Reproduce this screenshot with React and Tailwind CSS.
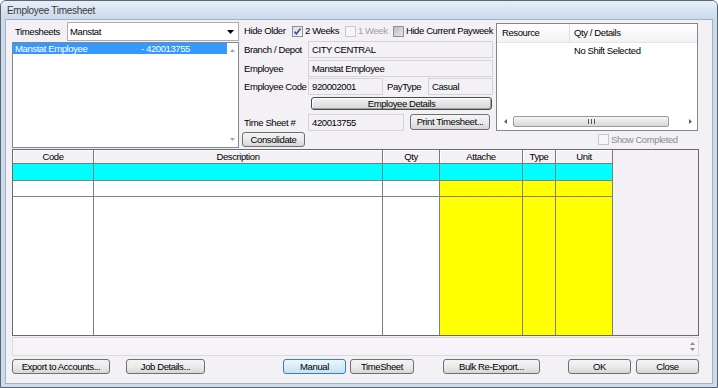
import React from "react";

function Btn({ children, className = "", focus = false }) {
  return (
    <div
      className={
        "flex items-center justify-center rounded-[3px] border text-[9.5px] leading-none text-black " +
        (focus
          ? "border-[#3c7fb1] bg-linear-to-b from-[#eaf6fd] to-[#c6e2f5] "
          : "border-[#707070] bg-linear-to-b from-[#f4f4f4] via-[#ebebeb] to-[#d6d6d6] ") +
        className
      }
    >
      {children}
    </div>
  );
}

function Field({ children, className = "" }) {
  return (
    <div
      className={
        "h-[17px] border border-[#d4d4d4] bg-[#f3f1f5] flex items-center px-[3px] text-[9.5px] leading-none text-black " +
        className
      }
    >
      {children}
    </div>
  );
}

function Check({ checked = false, disabled = false, dark = false }) {
  return (
    <div
      className={
        "w-[11px] h-[11px] shrink-0 border flex items-center justify-center " +
        (disabled
          ? "border-[#c8c8c8] bg-[#f6f6f6]"
          : dark
          ? "border-[#8e8f8f] bg-linear-to-br from-[#bdbdbd] to-[#e8e8e8]"
          : "border-[#8e8f8f] bg-linear-to-br from-[#dedede] to-[#fbfbfb]")
      }
    >
      {checked && (
        <svg width="9" height="9" viewBox="0 0 9 9">
          <path d="M1.5 4.6 L3.4 6.8 L7.6 1.4" stroke="#3b58a6" strokeWidth="1.7" fill="none" />
        </svg>
      )}
    </div>
  );
}

function Label({ children, className = "" }) {
  return <div className={"text-[9.5px] leading-none text-black " + className}>{children}</div>;
}

export default function App() {
  return (
    <div className="w-[718px] h-[388px] bg-white whitespace-nowrap tracking-[-0.4px] font-['Liberation_Sans',Arial,sans-serif]">
      <div className="w-[718px] h-[388px] border border-[#5b6674] rounded-t-[6px] bg-[#cddaea] flex flex-col overflow-hidden">
        {/* Title bar */}
        <div className="h-[18px] shrink-0 bg-linear-to-b from-[#e7eff9] to-[#cad9ec] flex items-center pl-[6px] text-[10px] tracking-[-0.3px] text-[#3a3a3a]">
          Employee Timesheet
        </div>
        {/* Body */}
        <div className="flex-1 mx-[4px] mb-[3px] border border-[#a2b2c5] bg-[#f3f1f5] flex flex-col">
          {/* Top section */}
          <div className="flex pt-[2px] pl-[6px] h-[128px] shrink-0">
            {/* Left column */}
            <div className="w-[227px] flex flex-col">
              <div className="h-[19px] flex items-center">
                <Label className="w-[55px] pl-[3px]">Timesheets</Label>
                <div className="flex-1 h-[19px] border border-[#abadb3] bg-white flex items-center pl-[2px] pr-[4px]">
                  <span className="flex-1 text-[9.5px] leading-none">Manstat</span>
                  <svg width="7" height="4" viewBox="0 0 7 4">
                    <path d="M0 0 H7 L3.5 4 Z" fill="#000" />
                  </svg>
                </div>
              </div>
              <div className="mt-[1px] h-[106px] border border-[#828790] bg-white flex">
                <div className="flex-1">
                  <div className="h-[11px] bg-[#3399ff] flex items-center text-white text-[9.5px] leading-none">
                    <span className="w-[128px] pl-[2px]">Manstat Employee</span>
                    <span>- 420013755</span>
                  </div>
                </div>
                <div className="w-[11px] flex flex-col items-center justify-between py-[6px]">
                  <svg width="5" height="3" viewBox="0 0 5 3">
                    <path d="M0 3 H5 L2.5 0 Z" fill="#a5a5a5" />
                  </svg>
                  <svg width="5" height="3" viewBox="0 0 5 3">
                    <path d="M0 0 H5 L2.5 3 Z" fill="#a5a5a5" />
                  </svg>
                </div>
              </div>
            </div>

            {/* Middle column */}
            <div className="ml-[3px] w-[251px] flex flex-col">
              <div className="h-[18px] flex items-center text-[9.5px] leading-none">
                <span className="w-[51px] pl-[2px]">Hide Older</span>
                <div className="w-[54px] flex items-center">
                  <Check checked />
                  <span className="ml-[2px]">2 Weeks</span>
                </div>
                <div className="w-[49px] flex items-center">
                  <Check disabled />
                  <span className="ml-[2px] text-[#a0a0a0]">1 Week</span>
                </div>
                <div className="flex items-center">
                  <Check dark />
                  <span className="ml-[2px]">Hide Current Payweek</span>
                </div>
              </div>
              <div className="mt-[1px] flex items-center h-[17px]">
                <Label className="w-[66px] pl-[2px]">Branch / Depot</Label>
                <Field className="w-[185px]">CITY CENTRAL</Field>
              </div>
              <div className="mt-[2px] flex items-center h-[17px]">
                <Label className="w-[66px] pl-[2px]">Employee</Label>
                <Field className="w-[185px]">Manstat Employee</Field>
              </div>
              <div className="mt-[1px] flex items-center h-[17px]">
                <Label className="w-[66px] pl-[2px]">Employee Code</Label>
                <Field className="w-[75px]">920002001</Field>
                <Label className="ml-[4px] w-[41px]">PayType</Label>
                <Field className="w-[65px]">Casual</Field>
              </div>
              <div className="mt-[2px] ml-[69px] w-[181px] h-[13px] rounded-[3px] border border-[#4a4a4a] bg-linear-to-b from-[#f2f2f2] to-[#d9d9d9] shadow-[inset_1px_1px_0_#ffffff,inset_-1px_-1px_0_#a0a0a0] flex items-center justify-center text-[9.5px] leading-none">
                Employee Details
              </div>
              <div className="mt-[4px] flex items-start h-[17px]">
                <Label className="w-[66px] pl-[2px] h-[17px] flex items-center">Time Sheet #</Label>
                <Field className="w-[96px]">420013755</Field>
                <Btn className="ml-[6px] w-[80px] h-[16px]">Print Timesheet...</Btn>
              </div>
              <Btn className="mt-[1px] w-[63px] h-[15px]">Consolidate</Btn>
            </div>

            {/* Right column */}
            <div className="ml-[3px] w-[202px] flex flex-col">
              <div className="mt-[1px] h-[108px] border border-[#828790] bg-white flex flex-col">
                <div className="h-[19px] flex border-b border-[#e5e5e5] bg-linear-to-b from-[#ffffff] to-[#f3f3f3] text-[9.5px] leading-none">
                  <div className="w-[73px] border-r border-[#e0e0e0] flex items-center pl-[5px]">Resource</div>
                  <div className="flex-1 flex items-center pl-[4px]">Qty / Details</div>
                </div>
                <div className="h-[16px] flex items-center pl-[77px] text-[9.5px] leading-none">No Shift Selected</div>
                <div className="flex-1" />
                <div className="h-[12px] mb-[3px] flex items-center">
                  <div className="w-[16px] flex justify-center">
                    <svg width="3" height="5" viewBox="0 0 3 5">
                      <path d="M3 0 V5 L0 2.5 Z" fill="#606060" />
                    </svg>
                  </div>
                  <div className="w-[156px] h-[11px] rounded-[2px] border border-[#9b9b9b] bg-linear-to-b from-[#f4f4f4] to-[#d8d8d8] flex items-center justify-center">
                    <svg width="7" height="5" viewBox="0 0 7 5">
                      <path d="M0.5 0 V5 M3.5 0 V5 M6.5 0 V5" stroke="#555" strokeWidth="1" />
                    </svg>
                  </div>
                  <div className="flex-1 flex justify-end pr-[5px]">
                    <svg width="3" height="5" viewBox="0 0 3 5">
                      <path d="M0 0 V5 L3 2.5 Z" fill="#606060" />
                    </svg>
                  </div>
                </div>
              </div>
              <div className="mt-[3px] ml-[102px] flex items-center text-[9.5px] leading-none">
                <Check disabled />
                <span className="ml-[2px] text-[#8c8c8c]">Show Completed</span>
              </div>
            </div>
          </div>

          {/* Grid */}
          <div className="mt-[1px] ml-[6px] w-[687px] h-[187px] shrink-0 border border-[#6a6a6a] bg-[#f3f1f5] flex flex-col">
            <div className="h-[14px] flex">
              {[
                ["Code", "w-[81px]"],
                ["Description", "w-[289px]"],
                ["Qty", "w-[57px]"],
                ["Attache", "w-[83px]"],
                ["Type", "w-[33px]"],
                ["Unit", "w-[57px]"],
              ].map(([t, w]) => (
                <div
                  key={t}
                  className={
                    w +
                    " h-[14px] border-r border-b border-[#7a7a7a] bg-[#f3f1f5] shadow-[inset_1px_1px_0_#ffffff] flex items-center justify-center text-[9.5px] leading-none"
                  }
                >
                  {t}
                </div>
              ))}
            </div>
            <div className="h-[17px] flex">
              <div className="w-[81px] bg-[#00ffff] border-r border-b border-[#808080]" />
              <div className="w-[289px] bg-[#00ffff] border-r border-b border-[#808080]" />
              <div className="w-[57px] bg-[#00ffff] border-r border-b border-[#808080]" />
              <div className="w-[83px] bg-[#00ffff] border-r border-b border-[#808080]" />
              <div className="w-[33px] bg-[#00ffff] border-r border-b border-[#808080]" />
              <div className="w-[57px] bg-[#00ffff] border-r border-b border-[#808080]" />
            </div>
            <div className="h-[16px] flex">
              <div className="w-[81px] bg-white border-r border-b border-[#808080]" />
              <div className="w-[289px] bg-white border-r border-b border-[#808080]" />
              <div className="w-[57px] bg-white border-r border-b border-[#808080]" />
              <div className="w-[83px] bg-[#ffff00] border-r border-b border-[#808080]" />
              <div className="w-[33px] bg-[#ffff00] border-r border-b border-[#808080]" />
              <div className="w-[57px] bg-[#ffff00] border-r border-b border-[#808080]" />
            </div>
            <div className="flex-1 flex">
              <div className="w-[81px] bg-white border-r border-[#808080]" />
              <div className="w-[289px] bg-white border-r border-[#808080]" />
              <div className="w-[57px] bg-white border-r border-[#808080]" />
              <div className="w-[83px] bg-[#ffff00] border-r border-[#808080]" />
              <div className="w-[33px] bg-[#ffff00] border-r border-[#808080]" />
              <div className="w-[57px] bg-[#ffff00] border-r border-[#808080]" />
            </div>
          </div>

          {/* Status strip */}
          <div className="mt-[1px] ml-[6px] w-[687px] h-[19px] shrink-0 border border-[#dadada] bg-[#f6f4f8] flex justify-end">
            <div className="w-[11px] flex flex-col items-center justify-center gap-[3px]">
              <svg width="5" height="3" viewBox="0 0 5 3">
                <path d="M0 3 H5 L2.5 0 Z" fill="#8a8a8a" />
              </svg>
              <svg width="5" height="3" viewBox="0 0 5 3">
                <path d="M0 0 H5 L2.5 3 Z" fill="#8a8a8a" />
              </svg>
            </div>
          </div>

          {/* Buttons */}
          <div className="mt-[3px] h-[15px] flex">
            <Btn className="ml-[6px] w-[98px] h-[15px]">Export to Accounts...</Btn>
            <Btn className="ml-[16px] w-[79px] h-[15px]">Job Details...</Btn>
            <Btn focus className="ml-[78px] w-[63px] h-[15px]">Manual</Btn>
            <Btn className="ml-[4px] w-[64px] h-[15px]">TimeSheet</Btn>
            <Btn className="ml-[29px] w-[97px] h-[15px]">Bulk Re-Export...</Btn>
            <Btn className="ml-[28px] w-[63px] h-[15px]">OK</Btn>
            <Btn className="ml-[5px] w-[63px] h-[15px]">Close</Btn>
          </div>
        </div>
      </div>
    </div>
  );
}
